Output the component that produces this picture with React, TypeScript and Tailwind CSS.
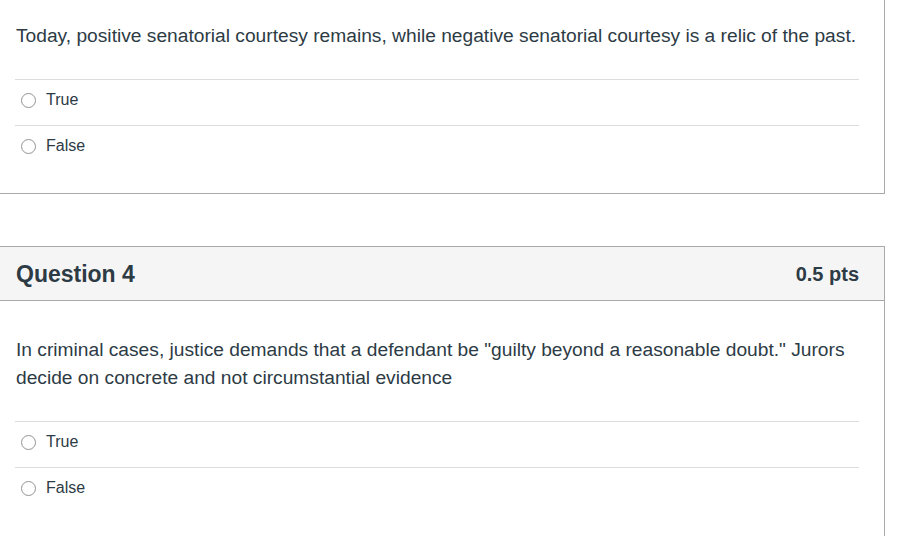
const font = { fontFamily: '"Liberation Sans", Arial, sans-serif' };

type Answer = { id: string; label: string };

function Radio() {
  return (
    <span className="inline-block w-[15px] h-[15px] rounded-full border border-[#939393] bg-white flex-shrink-0" />
  );
}

function AnswerList({ answers }: { answers: Answer[] }) {
  return (
    <div className="mr-[25px] ml-[15px]">
      {answers.map((a) => (
        <div key={a.id} className="flex items-center h-[46px] pb-[5px] border-t border-[#dcdcdc] pl-[6px]">
          <Radio />
          <span className="ml-[10px] text-[16px] text-[#2d3b45]">{a.label}</span>
        </div>
      ))}
    </div>
  );
}

const tf: Answer[] = [
  { id: 't', label: 'True' },
  { id: 'f', label: 'False' },
];

export default function App() {
  return (
    <div className="bg-white w-[898px] h-[536px] overflow-hidden" style={font}>
      {/* previous question, cut at the top */}
      <div className="w-[886px] -ml-[1px] border-r border-b border-l border-[#a9a9a9] pt-[22px] pb-[22px]">
        <p className="pl-[16px] text-[19.2px] leading-[28px] text-[#2d3b45] mb-[29px]">
          Today, positive senatorial courtesy remains, while negative senatorial courtesy is a relic of the past.
        </p>
        <AnswerList answers={tf} />
      </div>

      {/* Question 4 */}
      <div className="w-[886px] -ml-[1px] mt-[52px] border border-[#a9a9a9]">
        <div className="flex items-center justify-between h-[54px] pt-[1px] bg-[#f5f5f5] border-b border-[#a9a9a9] pl-[16px] pr-[25px]">
          <h2 className="text-[23px] font-bold text-[#2d3b45]">Question 4</h2>
          <span className="text-[20px] font-bold text-[#2d3b45]">0.5 pts</span>
        </div>
        <div className="pt-[35px] pb-[30px]">
          <p className="pl-[16px] pr-[30px] text-[19.2px] leading-[28px] text-[#2d3b45] mb-[29px]">
            In criminal cases, justice demands that a defendant be "guilty beyond a reasonable doubt." Jurors decide on concrete and not circumstantial evidence
          </p>
          <AnswerList answers={tf} />
        </div>
      </div>
    </div>
  );
}
